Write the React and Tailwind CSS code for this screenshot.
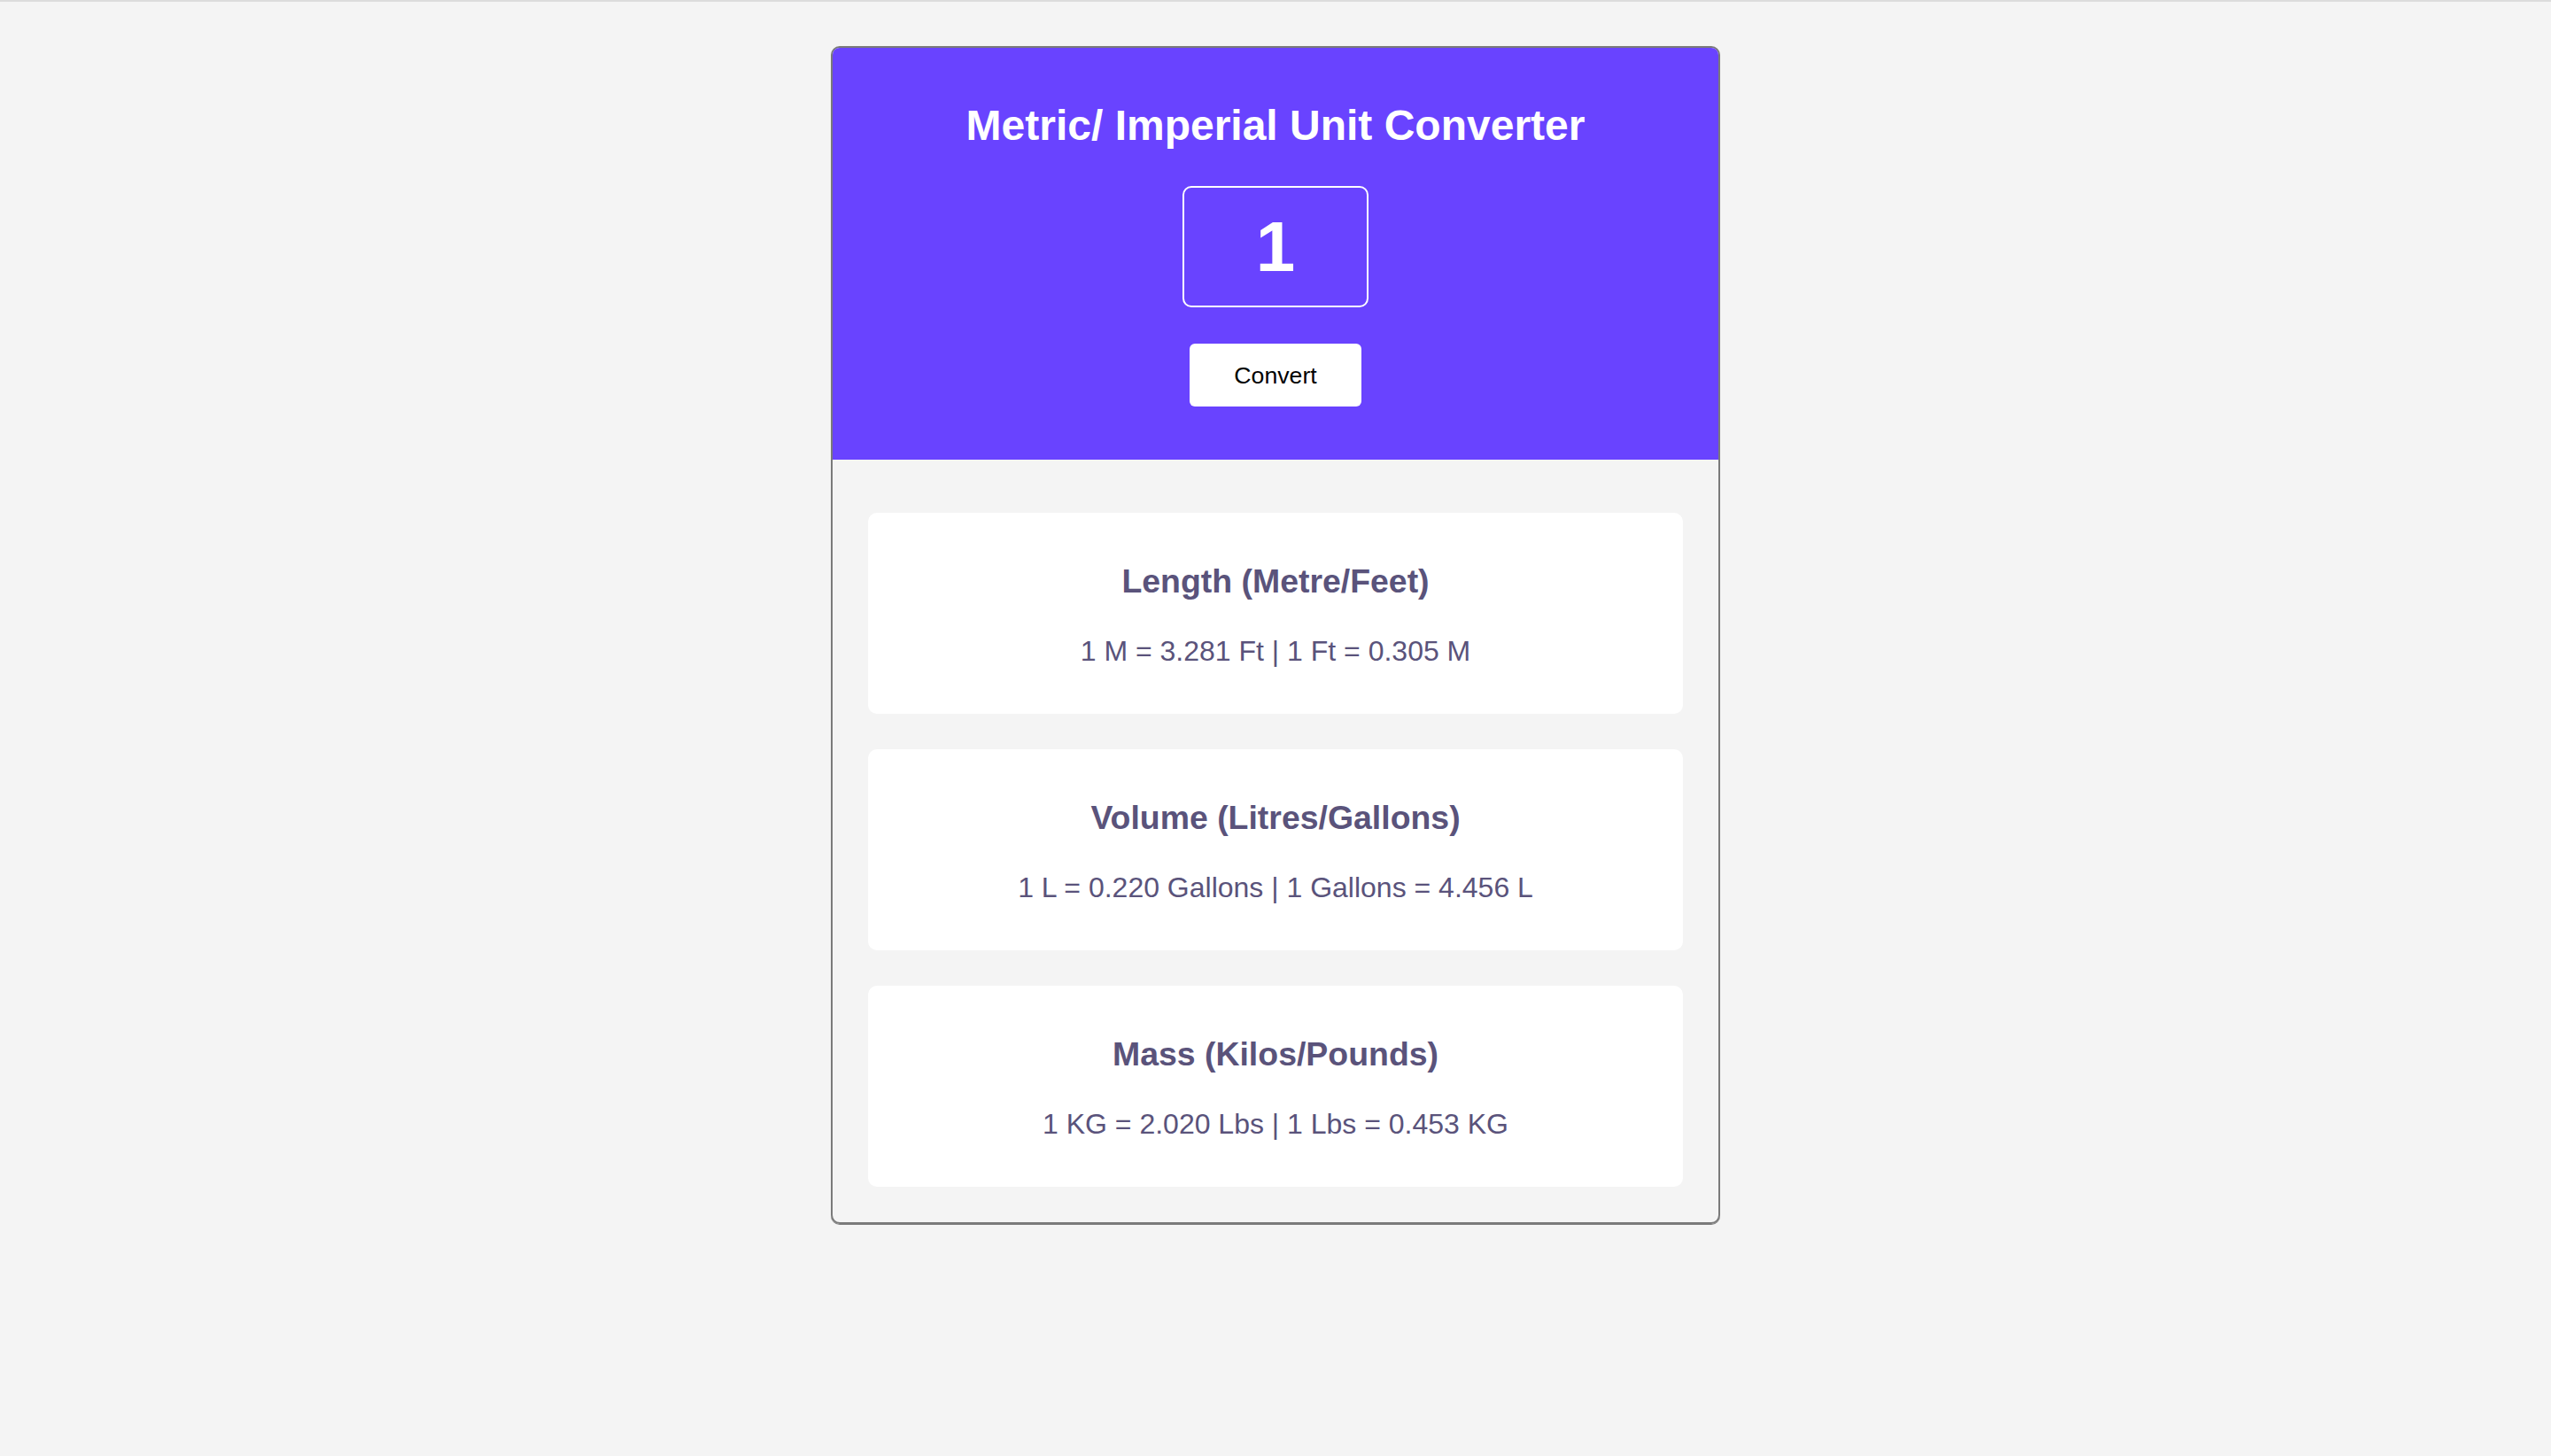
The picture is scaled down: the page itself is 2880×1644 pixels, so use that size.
const conversions = [
  { title: "Length (Metre/Feet)", text: "1 M = 3.281 Ft | 1 Ft = 0.305 M" },
  { title: "Volume (Litres/Gallons)", text: "1 L = 0.220 Gallons | 1 Gallons = 4.456 L" },
  { title: "Mass (Kilos/Pounds)", text: "1 KG = 2.020 Lbs | 1 Lbs = 0.453 KG" },
];

export default function App() {
  return (
    <div className="min-h-screen w-full bg-[#f4f4f4] font-['Liberation_Sans',Arial,sans-serif]">
      <div className="h-[2px] w-full bg-[#dcdcdc]" />

      <main className="mx-auto mt-[50px] w-[1004px] overflow-hidden rounded-[10px] border-2 border-[#7a7a7a] shadow-[0_1px_0_#7a7a7a]">
        {/* Header */}
        <section className="flex flex-col items-center bg-[#6943ff] pt-[60px] pb-[60px]">
          <h1 className="text-[48px] font-bold leading-[55px] text-white">
            Metric/ Imperial Unit Converter
          </h1>
          <input
            type="text"
            defaultValue="1"
            className="mt-[41px] h-[137px] w-[210px] rounded-[10px] border-2 border-white bg-transparent text-center text-[80px] font-bold text-white outline-none"
          />
          <button className="mt-[41px] h-[71px] w-[194px] rounded-[6px] bg-white text-[26.67px] text-black">
            Convert
          </button>
        </section>

        {/* Results */}
        <section className="flex flex-col gap-[40px] px-[40px] pt-[60px] pb-[40px]">
          {conversions.map((c) => (
            <div
              key={c.title}
              className="flex h-[227px] flex-col items-center rounded-[10px] bg-white pt-[56px] text-[#5a537b]"
            >
              <h3 className="text-[37.44px] font-bold leading-[43px]">{c.title}</h3>
              <p className="mt-[39px] text-[32px] leading-[37px]">{c.text}</p>
            </div>
          ))}
        </section>
      </main>
    </div>
  );
}
